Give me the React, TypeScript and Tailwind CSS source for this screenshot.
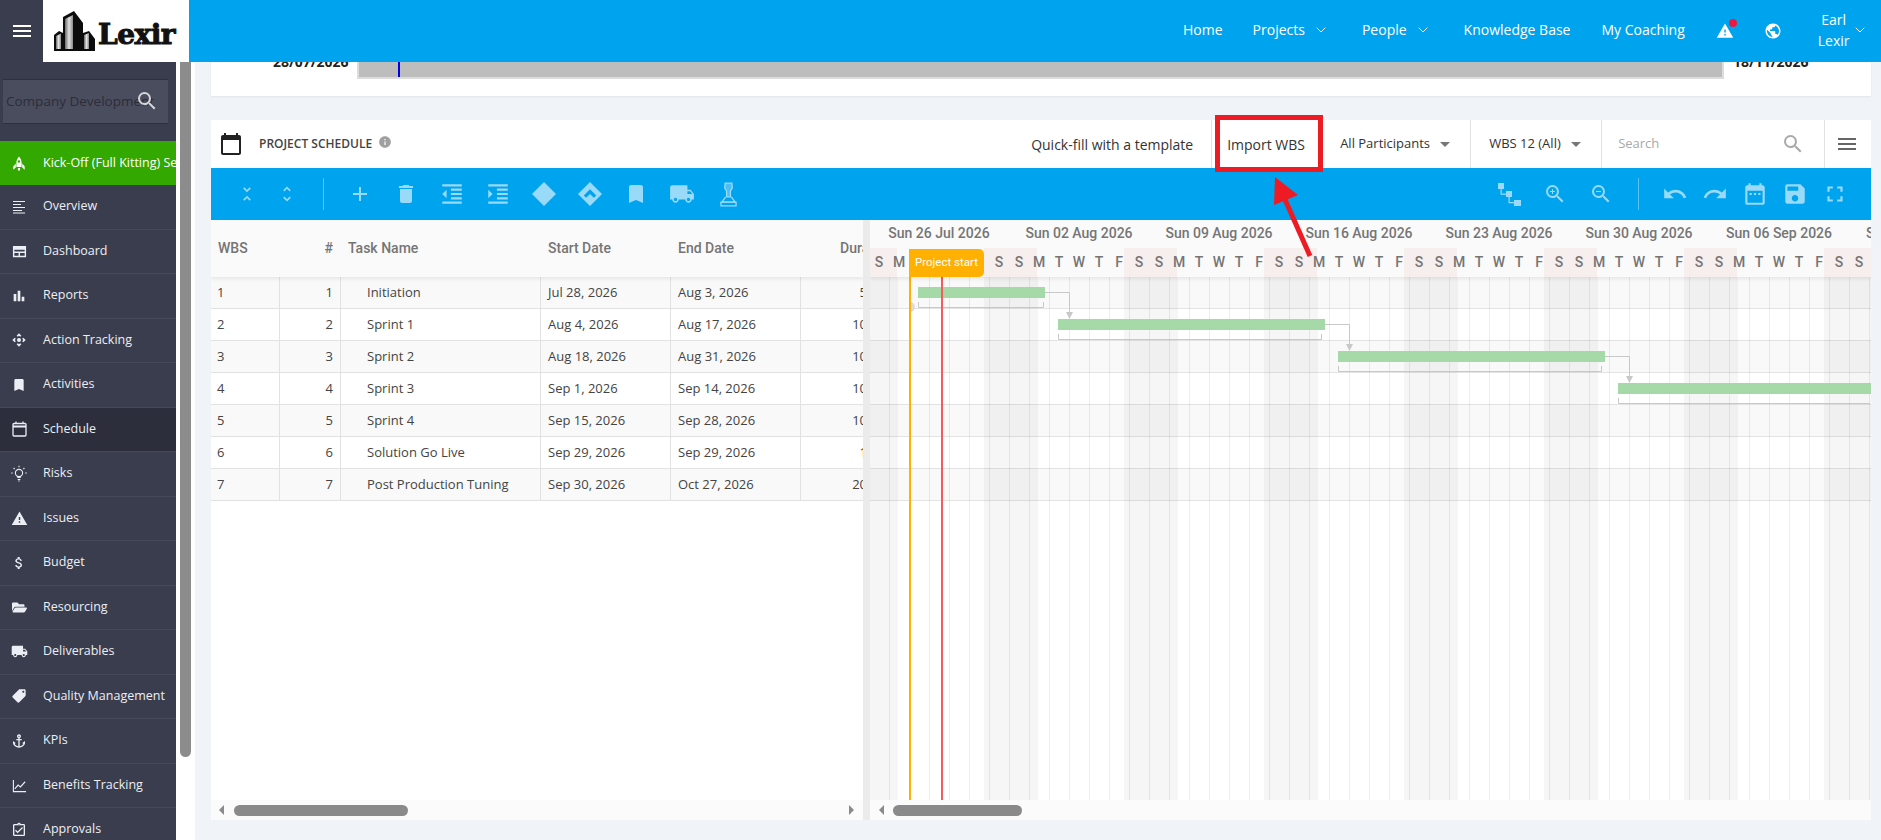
import type { ReactNode } from "react";
import { ChevronDown } from "lucide-react";
import { FaFolderOpen } from "react-icons/fa";
import {
  MdAdd,
  MdAnchor,
  MdAttachMoney,
  MdBarChart,
  MdBookmark,
  MdCalendarToday,
  MdControlCamera,
  MdDateRange,
  MdDelete,
  MdFormatIndentDecrease,
  MdFormatIndentIncrease,
  MdFullscreen,
  MdInfo,
  MdLocalOffer,
  MdLocalShipping,
  MdMenu,
  MdOutlineAssignmentTurnedIn,
  MdPublic,
  MdRedo,
  MdSave,
  MdSearch,
  MdUndo,
  MdUnfoldLess,
  MdUnfoldMore,
  MdWarning,
  MdZoomIn,
  MdZoomOut,
} from "react-icons/md";

const OverviewIcon = () => (
  <svg width="14" height="14" viewBox="0 0 14 14" stroke="currentColor" strokeWidth="1.200">
    <path d="M1 1.500h12M1 4.500h8M1 7.500h12M1 10.500h9M1 13h12" />
  </svg>
);

const DashboardIcon = () => (
  <svg width="15" height="15" viewBox="0 0 16 16" fill="currentColor">
    <path d="M1 2h14v12H1zM2.500 6v2h11V6zM2.500 9.500v3H7v-3zM8.500 9.500v3h5v-3z" fillRule="evenodd" />
  </svg>
);

const ScheduleIcon = () => (
  <svg width="15" height="16" viewBox="0 0 15 16" fill="none" stroke="currentColor" strokeWidth="1.300">
    <rect x="1" y="2.500" width="13" height="12.500" rx="1" />
    <path d="M1 5.500h13" strokeWidth="2" />
    <path d="M4 .5v2M11 .5v2" />
  </svg>
);

const BulbIcon = () => (
  <svg width="18" height="18" viewBox="0 0 18 18" fill="none" stroke="currentColor" strokeWidth="1.100">
    <circle cx="9" cy="8" r="3.600" />
    <path d="M7.300 12.500h3.400M7.700 14.500h2.600M8.300 16h1.400" />
    <path d="M9 .8v1.500M3.600 3l1 1M14.400 3l-1 1M1.200 8h1.500M15.300 8h1.500" />
  </svg>
);

const RocketIcon = () => (
  <svg width="14" height="15" viewBox="0 0 16 16" fill="currentColor">
    <path
      d="M8 0C10.200 2.500 11 5 11 7.500V12H5V7.500C5 5 5.800 2.500 8 0zM8 4.200a1.400 1.400 0 100 2.800 1.400 1.400 0 000-2.800z"
      fillRule="evenodd"
    />
    <path d="M4.300 8L1.500 11.500V15L4.300 12.500zM11.700 8l2.800 3.500V15l-2.800-2.500zM6.800 13h2.400v3H6.800z" />
  </svg>
);

const ChartIcon = () => (
  <svg width="15" height="15" viewBox="0 0 16 16" fill="none" stroke="currentColor" strokeWidth="1.200">
    <path d="M1.500 2v12.500H15" />
    <path d="M3 11.500l3.500-4 2.500 2L14 4" />
  </svg>
);

const menu: { label: string; icon: ReactNode; active?: boolean }[] = [
  { label: "Overview", icon: <OverviewIcon /> },
  { label: "Dashboard", icon: <DashboardIcon /> },
  { label: "Reports", icon: <MdBarChart size={16} /> },
  { label: "Action Tracking", icon: <MdControlCamera size={16} /> },
  { label: "Activities", icon: <MdBookmark size={16} /> },
  { label: "Schedule", icon: <ScheduleIcon />, active: true },
  { label: "Risks", icon: <BulbIcon /> },
  { label: "Issues", icon: <MdWarning size={17} /> },
  { label: "Budget", icon: <MdAttachMoney size={16} /> },
  { label: "Resourcing", icon: <FaFolderOpen size={15} /> },
  { label: "Deliverables", icon: <MdLocalShipping size={17} /> },
  { label: "Quality Management", icon: <MdLocalOffer size={16} className="-scale-x-100" /> },
  { label: "KPIs", icon: <MdAnchor size={16} /> },
  { label: "Benefits Tracking", icon: <ChartIcon /> },
  { label: "Approvals", icon: <MdOutlineAssignmentTurnedIn size={16} /> },
];

const rows = [
  ["1", "1", "Initiation", "Jul 28, 2026", "Aug 3, 2026", "5"],
  ["2", "2", "Sprint 1", "Aug 4, 2026", "Aug 17, 2026", "10"],
  ["3", "3", "Sprint 2", "Aug 18, 2026", "Aug 31, 2026", "10"],
  ["4", "4", "Sprint 3", "Sep 1, 2026", "Sep 14, 2026", "10"],
  ["5", "5", "Sprint 4", "Sep 15, 2026", "Sep 28, 2026", "10"],
  ["6", "6", "Solution Go Live", "Sep 29, 2026", "Sep 29, 2026", "1"],
  ["7", "7", "Post Production Tuning", "Sep 30, 2026", "Oct 27, 2026", "20"],
];

const weeks = [
  "Sun 26 Jul 2026",
  "Sun 02 Aug 2026",
  "Sun 09 Aug 2026",
  "Sun 16 Aug 2026",
  "Sun 23 Aug 2026",
  "Sun 30 Aug 2026",
  "Sun 06 Sep 2026",
  "Sun 13 Sep 2026",
];

const days = "SMTWTFS".repeat(8).split("");
const weekendBands = [-26, 114, 254, 394, 534, 674, 814, 954];
const gridLines = Array.from({ length: 50 }, (_, i) => i * 20 + 19);

// gantt coordinates, relative to the chart body
const bars = [
  { left: 48, width: 127, top: 10 },
  { left: 188, width: 267, top: 42 },
  { left: 468, width: 267, top: 74 },
  { left: 748, width: 267, top: 106 },
];

const ToolIcon = ({ children, wide }: { children: ReactNode; wide?: boolean }) => (
  <span className={`flex h-full items-center justify-center ${wide ? "w-[46px]" : "w-10"}`}>{children}</span>
);

const DiamondIcon = () => (
  <svg width="24" height="24" viewBox="0 0 25 25" fill="currentColor">
    <path d="M12.500 0L25 12.500 12.500 25 0 12.500z" />
  </svg>
);

const DiamondUpIcon = () => (
  <svg width="24" height="24" viewBox="0 0 25 25" fill="currentColor">
    <path d="M12.500 0L25 12.500 12.500 25 0 12.500zM12.500 7.500L6 14l2.500 2.500 4-4 4 4L19 14z" fillRule="evenodd" />
  </svg>
);

const JoystickIcon = () => (
  <svg width="17" height="25" viewBox="0 0 18 26" fill="none" stroke="currentColor" strokeWidth="1.400">
    <path d="M5.500 1h7l.5 5-2 3.500v6h-4v-6L5 6z" fill="currentColor" fillOpacity="0.5" />
    <path d="M6 15.500L2 21h14l-4-5.500" />
    <path d="M1 21h16v4H1z" />
  </svg>
);

const TreeIcon = () => (
  <svg width="25" height="25" viewBox="0 0 25 25" fill="currentColor">
    <path d="M1 1h6v6H1zM9 9h6v6H9zM17 18h7v6h-7z" />
    <path d="M3.500 7h1.200v4.500H9v1.200H3.500zM11.500 15h1.200v5H17v1.200h-5.500z" />
  </svg>
);

const LexirLogo = () => (
  <div className="flex h-full w-[146px] shrink-0 items-center bg-white pl-[11px]">
    <svg width="41" height="40" viewBox="0 0 41 40">
      <defs>
        <linearGradient id="towerFace" x1="0" y1="0" x2="1" y2="0">
          <stop offset="0" stopColor="#6a6a6a" />
          <stop offset="0.5" stopColor="#e2e2e2" />
          <stop offset="1" stopColor="#8a8a8a" />
        </linearGradient>
      </defs>
      <path d="M0 40V24l5-4 4 2V6L20 0l9 12v10l6-2 6 8v12z" fill="#0c0c0c" />
      <path d="M11 38V8l8-4v34z" fill="url(#towerFace)" />
      <path d="M2 38V25l5-2.500V38z" fill="url(#towerFace)" />
      <path d="M30 38V24l5-2v16z" fill="url(#towerFace)" />
    </svg>
    <span className="ml-[3px] mt-[8px] font-['DejaVu_Serif',serif] text-[28px] leading-none font-black tracking-[-0.5px] text-[#111] [-webkit-text-stroke:1px_#111]">
      Lexir
    </span>
  </div>
);

const NavChevron = ({ className }: { className: string }) => (
  <ChevronDown size={16} strokeWidth={1.500} className={className} />
);

const TopBar = () => (
  <header className="relative z-20 flex h-[62px] shrink-0 items-center bg-[#00a3ee] text-[14px] text-white">
    <div className="flex h-full w-[43px] shrink-0 items-center justify-center bg-[#3a3d4d]">
      <MdMenu size={24} />
    </div>
    <LexirLogo />
    <nav className="flex h-full flex-1 items-center pb-[3px]">
      <span className="ml-[994px]">Home</span>
      <span className="ml-[30px]">Projects</span>
      <NavChevron className="ml-[8px]" />
      <span className="ml-[33px]">People</span>
      <NavChevron className="ml-[8px]" />
      <span className="ml-[33px]">Knowledge Base</span>
      <span className="ml-[31px]">My Coaching</span>
      <span className="relative ml-[31px] mt-[2px]">
        <MdWarning size={18} />
        <span className="absolute -top-[3px] right-[-3px] h-[8px] w-[8px] rounded-full bg-[#f0173f]" />
      </span>
      <MdPublic size={18} className="ml-[30px] mt-[3px]" />
      <span className="ml-[36px] text-center leading-[21px]">
        Earl
        <br />
        Lexir
      </span>
      <NavChevron className="ml-[2px]" />
    </nav>
  </header>
);

const Sidebar = () => (
  <aside className="flex w-[176px] shrink-0 flex-col overflow-hidden bg-[#3a3d4d] text-[12.500px] text-[#eceef5]">
    <div className="relative mx-[3px] mt-[17px] flex h-[45px] w-[165px] shrink-0 items-center overflow-hidden border-t border-b border-[#2e3040] bg-[#4a4d5e] pl-[3px] text-[13.500px] whitespace-nowrap text-[#2b2d3a]">
      Company Development
      <MdSearch size={24} className="absolute right-[9px] top-[9px] text-[#d4d5da]" />
    </div>
    <div className="mt-[17px] flex h-[44px] shrink-0 items-center bg-[#33a800] whitespace-nowrap text-white">
      <span className="flex w-[38px] shrink-0 justify-center">
        <RocketIcon />
      </span>
      <span className="ml-[5px]">Kick-Off (Full Kitting) Sessions</span>
    </div>
    {menu.map((item) => (
      <div
        key={item.label}
        className={`flex h-[44.500px] shrink-0 items-center border-b border-[#464959] ${item.active ? "bg-[#2c2e3c]" : ""}`}
      >
        <span className="flex w-[38px] shrink-0 justify-center">{item.icon}</span>
        <span className="ml-[5px]">{item.label}</span>
      </div>
    ))}
  </aside>
);

const SummaryCard = () => (
  <section className="-mt-[24px] flex h-[58px] w-[1660px] shrink-0 items-start bg-white text-[14px] font-bold text-[#222] shadow-[0_1px_2px_rgba(0,0,0,0.06)]">
    <span className="mt-[13px] ml-[62px] w-[84px]">28/07/2026</span>
    <div className="relative h-[41px] w-[1367px] border-r-2 border-b-2 border-l-2 border-[#dcdcdc] bg-[#bdbdbd]">
      <span className="absolute left-[39px] top-0 h-full w-[2px] bg-[#0000e0]" />
    </div>
    <span className="mt-[13px] ml-[9px]">18/11/2026</span>
  </section>
);

const ScheduleHeader = () => (
  <div className="flex h-[48px] items-center bg-white text-[14px] text-[#333]">
    <MdCalendarToday size={24} className="ml-[8px] text-[#222]" />
    <span className="ml-[16px] text-[12px] font-semibold text-[#444]">PROJECT SCHEDULE</span>
    <MdInfo size={14} className="mb-[4px] ml-[6px] text-[#a0a0a0]" />
    <span className="ml-[639px] w-[180px]">Quick-fill with a template</span>
    <span className="flex h-full w-[129px] items-center border-l border-[#e2e2e2] pl-[15px]">Import WBS</span>
    <span className="flex h-full w-[130px] items-center text-[13px]">
      All Participants
      <span className="ml-[10px] h-0 w-0 border-x-[5px] border-t-[5px] border-x-transparent border-t-[#777]" />
    </span>
    <span className="flex h-full w-[131px] items-center border-l border-[#e2e2e2] pl-[18px] text-[13px]">
      WBS 12 (All)
      <span className="ml-[10px] h-0 w-0 border-x-[5px] border-t-[5px] border-x-transparent border-t-[#777]" />
    </span>
    <span className="flex h-full w-[223px] items-center border-l border-[#e2e2e2] pl-[16px] text-[13px] text-[#a9a9a9]">
      Search
      <MdSearch size={24} className="ml-[122px] text-[#a9a9a9]" />
    </span>
    <span className="flex h-full w-[45px] items-center justify-center border-l border-[#e2e2e2] text-[#666]">
      <MdMenu size={24} />
    </span>
  </div>
);

const Toolbar = () => (
  <div className="flex h-[52px] items-center justify-between bg-[#00a3ee] pr-[16px] pl-[16px] text-[#99daf9]">
    <div className="flex h-full items-center">
      <ToolIcon><MdUnfoldLess size={20} /></ToolIcon>
      <ToolIcon><MdUnfoldMore size={20} /></ToolIcon>
      <span className="mr-[13px] ml-[16px] h-[32px] w-px bg-[#59c3f4]" />
      <ToolIcon wide><MdAdd size={24} /></ToolIcon>
      <ToolIcon wide><MdDelete size={24} /></ToolIcon>
      <ToolIcon wide><MdFormatIndentDecrease size={26} /></ToolIcon>
      <ToolIcon wide><MdFormatIndentIncrease size={26} /></ToolIcon>
      <ToolIcon wide><DiamondIcon /></ToolIcon>
      <ToolIcon wide><DiamondUpIcon /></ToolIcon>
      <ToolIcon wide><MdBookmark size={24} /></ToolIcon>
      <ToolIcon wide><MdLocalShipping size={26} /></ToolIcon>
      <ToolIcon wide><JoystickIcon /></ToolIcon>
    </div>
    <div className="flex h-full items-center">
      <ToolIcon wide><TreeIcon /></ToolIcon>
      <ToolIcon wide><MdZoomIn size={24} /></ToolIcon>
      <ToolIcon wide><MdZoomOut size={24} /></ToolIcon>
      <span className="mr-[16px] ml-[14px] h-[32px] w-px bg-[#59c3f4]" />
      <ToolIcon><MdUndo size={26} /></ToolIcon>
      <ToolIcon><MdRedo size={26} /></ToolIcon>
      <ToolIcon><MdDateRange size={26} /></ToolIcon>
      <ToolIcon><MdSave size={26} /></ToolIcon>
      <ToolIcon><MdFullscreen size={26} /></ToolIcon>
    </div>
  </div>
);

const TaskGrid = () => (
  <div className="flex w-[652px] shrink-0 flex-col overflow-hidden bg-white">
    <div className="relative z-10 grid h-[57px] shrink-0 grid-cols-[69px_61px_200px_130px_130px_66px] items-center bg-[#fafafa] font-['Roboto',sans-serif] text-[14px] font-medium text-[#757575] shadow-[0_2px_4px_rgba(0,0,0,0.08)]">
      <span className="pl-[7px]">WBS</span>
      <span className="pr-[8px] text-right">#</span>
      <span className="pl-[7px]">Task Name</span>
      <span className="pl-[7px]">Start Date</span>
      <span className="pl-[7px]">End Date</span>
      <span className="pl-[39px] whitespace-nowrap">Duration</span>
    </div>
    <div className="flex-1 text-[13px] text-[#444]">
      {rows.map((r, i) => (
        <div
          key={r[0]}
          className={`grid h-[32px] grid-cols-[69px_61px_200px_130px_130px_66px] items-center border-b border-[#e2e2e2] ${i % 2 === 0 ? "bg-[#f9f9f9]" : "bg-white"}`}
        >
          <span className="flex h-full items-center border-r border-[#e2e2e2] pl-[6px]">{r[0]}</span>
          <span className="flex h-full items-center justify-end border-r border-[#e2e2e2] pr-[7px]">{r[1]}</span>
          <span className="flex h-full items-center border-r border-[#e2e2e2] pl-[26px]">{r[2]}</span>
          <span className="flex h-full items-center border-r border-[#e2e2e2] pl-[7px]">{r[3]}</span>
          <span className="flex h-full items-center border-r border-[#e2e2e2] pl-[7px]">{r[4]}</span>
          <span className="text-right">{r[5]}</span>
        </div>
      ))}
    </div>
    <div className="relative h-[20px] shrink-0 bg-[#fbfbfb]">
      <span className="absolute left-[8px] top-[5px] h-0 w-0 border-y-[5px] border-r-[5px] border-y-transparent border-r-[#8a8a8a]" />
      <span className="absolute left-[23px] top-[5px] h-[11px] w-[174px] rounded-full bg-[#8a8a8a]" />
      <span className="absolute right-[9px] top-[5px] h-0 w-0 border-y-[5px] border-l-[5px] border-y-transparent border-l-[#8a8a8a]" />
    </div>
  </div>
);

const GanttLinks = () => (
  <svg className="absolute inset-0" width="1000" height="523" fill="none" stroke="#c8c8c8" strokeWidth="1">
    <path d="M40 25a5 5 0 010 10z" fill="#dcdcdc" stroke="none" />
    <path d="M48.500 25v5.500h125V25" />
    <path d="M188.500 57v5.500h263V57" />
    <path d="M468.500 89v5.500h263V89" />
    <path d="M748.500 121v5.500H1000" />
    <path d="M175 15.500h24.500V36" />
    <path d="M455 47.500h24.500V68" />
    <path d="M735 79.500h24.500V100" />
    <path d="M196 35h7l-3.500 7z" fill="#c8c8c8" stroke="none" />
    <path d="M476 67h7l-3.500 7z" fill="#c8c8c8" stroke="none" />
    <path d="M756 99h7l-3.500 7z" fill="#c8c8c8" stroke="none" />
  </svg>
);

const Gantt = () => (
  <div className="flex min-w-0 flex-1 flex-col overflow-hidden bg-white">
    <div className="relative z-10 h-[57px] shrink-0 overflow-hidden bg-[#fafafa] font-['Roboto',sans-serif] text-[14px] font-medium text-[#757575] shadow-[0_2px_4px_rgba(0,0,0,0.08)]">
      {weekendBands.map((x) => (
        <span key={x} className="absolute top-[28px] h-[29px] w-[53px] bg-[#f7eeee]" style={{ left: x }} />
      ))}
      <div className="relative flex h-[28px] w-[1120px] items-center pb-[2px] -ml-px">
        {weeks.map((w) => (
          <span key={w} className="w-[140px] shrink-0 text-center whitespace-nowrap">
            {w}
          </span>
        ))}
      </div>
      <div className="absolute left-0 top-[28px] flex h-[29px] w-[1120px]">
        {days.map((d, i) => (
          <span key={i} className="flex w-[20px] shrink-0 items-center justify-center -translate-x-px">
            {d}
          </span>
        ))}
      </div>
      <span className="absolute left-[39px] top-[29px] flex h-[28px] w-[75px] items-center justify-center rounded-r-[5px] bg-[#ffb000] text-[11.500px] font-normal text-white">
        Project start
      </span>
    </div>
    <div className="relative flex-1 overflow-hidden">
      {rows.map((r, i) => (
        <div
          key={r[0]}
          className={`h-[32px] border-b border-[#e3e3e3] ${i % 2 === 0 ? "bg-[#f9f9f9]" : "bg-white"}`}
        />
      ))}
      {weekendBands.map((x) => (
        <span key={x} className="absolute top-0 h-full w-[54px] bg-[#00000009]" style={{ left: x }} />
      ))}
      {gridLines.map((x) => (
        <span key={x} className="absolute top-0 h-full w-px bg-[#00000012]" style={{ left: x }} />
      ))}
      <GanttLinks />
      {bars.map((b) => (
        <span
          key={b.left}
          className="absolute h-[11px] bg-[#a5d9a7]"
          style={{ left: b.left, top: b.top, width: b.width }}
        />
      ))}
      <span className="absolute left-[39px] top-0 h-full w-[2px] bg-[#ffb000]" />
      <span className="absolute left-[71px] top-0 h-full w-[2px] bg-[#f75a5a]" />
    </div>
    <div className="relative h-[20px] shrink-0 bg-[#fbfbfb]">
      <span className="absolute left-[9px] top-[5px] h-0 w-0 border-y-[5px] border-r-[5px] border-y-transparent border-r-[#8a8a8a]" />
      <span className="absolute left-[23px] top-[5px] h-[11px] w-[129px] rounded-full bg-[#8a8a8a]" />
    </div>
  </div>
);

// red annotation drawn on top of the screenshot
const Annotation = () => (
  <>
    <div className="absolute left-[1215px] top-[115px] z-30 h-[57px] w-[108px] border-[5px] border-[#ed1c24]" />
    <svg className="absolute left-[1260px] top-[170px] z-30" width="70" height="95" viewBox="1260 170 70 95">
      <path d="M1275 177L1274 205 1298 195z" fill="#ed1c24" />
      <path d="M1283 195L1310 256" stroke="#ed1c24" strokeWidth="5" />
    </svg>
  </>
);

export default function App() {
  return (
    <div className="relative flex h-[840px] w-[1881px] flex-col overflow-hidden bg-[#f0f4f8] font-['Open_Sans',sans-serif]">
      <TopBar />
      <div className="flex min-h-0 flex-1">
        <Sidebar />
        <div className="w-[19px] shrink-0 bg-white">
          <div className="ml-[4px] h-[695px] w-[11px] rounded-b-full bg-[#8c8c8c]" />
        </div>
        <main className="flex min-w-0 flex-1 flex-col overflow-hidden pl-[16px]">
          <SummaryCard />
          <div className="mt-[24px] flex h-[700px] w-[1660px] shrink-0 flex-col">
            <ScheduleHeader />
            <Toolbar />
            <div className="flex h-[600px] min-h-0 shrink-0">
              <TaskGrid />
              <div className="w-[7px] shrink-0 bg-[#ebebeb]" />
              <Gantt />
            </div>
          </div>
        </main>
      </div>
      <Annotation />
    </div>
  );
}
